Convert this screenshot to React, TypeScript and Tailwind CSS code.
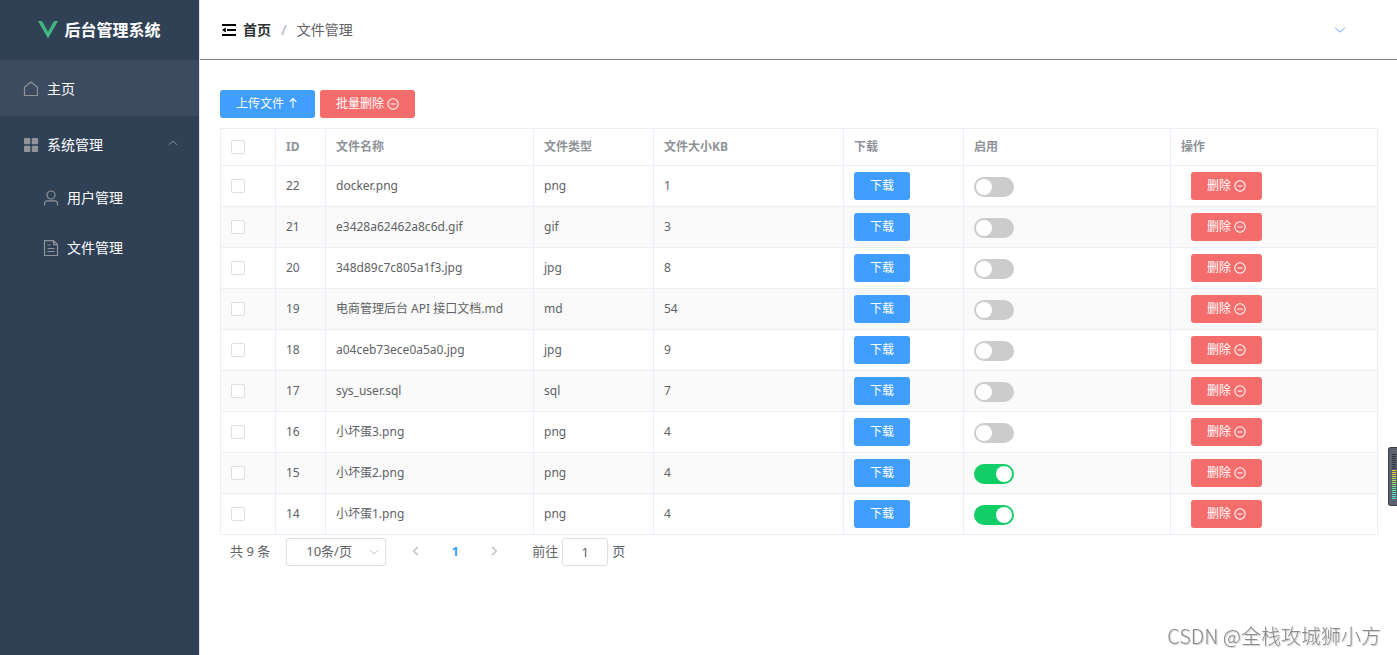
import { useState } from 'react';
import type { ReactNode } from 'react';
import clsx from 'clsx';

interface FileRow {
  id: number;
  name: string;
  type: string;
  size: number;
  enabled: boolean;
}

const initialFiles: FileRow[] = [
  { id: 22, name: 'docker.png', type: 'png', size: 1, enabled: false },
  { id: 21, name: 'e3428a62462a8c6d.gif', type: 'gif', size: 3, enabled: false },
  { id: 20, name: '348d89c7c805a1f3.jpg', type: 'jpg', size: 8, enabled: false },
  { id: 19, name: '电商管理后台 API 接口文档.md', type: 'md', size: 54, enabled: false },
  { id: 18, name: 'a04ceb73ece0a5a0.jpg', type: 'jpg', size: 9, enabled: false },
  { id: 17, name: 'sys_user.sql', type: 'sql', size: 7, enabled: false },
  { id: 16, name: '小坏蛋3.png', type: 'png', size: 4, enabled: false },
  { id: 15, name: '小坏蛋2.png', type: 'png', size: 4, enabled: true },
  { id: 14, name: '小坏蛋1.png', type: 'png', size: 4, enabled: true },
];

const meterColors = [
  '#2f333c', '#2f333c', '#2f333c', '#2f333c', '#2f333c', '#2f333c', '#2f333c', '#2f333c',
  '#f0c830', '#f0d03a', '#e4d840', '#d0e048', '#c0e850', '#b0e858', '#a0e868', '#90e878',
  '#80e888', '#70e898', '#60e8a8', '#58e8b8', '#58e8c4', '#58e8d0', '#58e8d0',
];

interface IconProps {
  className?: string;
  children: ReactNode;
}

function Icon({ className, children }: IconProps) {
  return (
    <svg
      viewBox="0 0 16 16"
      fill="none"
      stroke="currentColor"
      strokeWidth="1.2"
      className={clsx('shrink-0', className)}
      aria-hidden="true"
    >
      {children}
    </svg>
  );
}

function RemoveIcon() {
  return (
    <Icon className="size-3">
      <circle cx="8" cy="8" r="6.9" strokeWidth="1.4" />
      <path d="M4.5 8h7" strokeWidth="1.4" />
    </Icon>
  );
}

interface ActionButtonProps {
  color: 'blue' | 'red';
  className?: string;
  onClick?: () => void;
  children: ReactNode;
}

function ActionButton({ color, className, onClick, children }: ActionButtonProps) {
  return (
    <button
      type="button"
      onClick={onClick}
      className={clsx(
        'inline-flex h-7 items-center gap-[3px] rounded-[3px] px-4 text-xs text-white align-middle cursor-pointer',
        color === 'blue' ? 'bg-[#409eff]' : 'bg-[#f56c6c]',
        className,
      )}
    >
      {children}
    </button>
  );
}

interface CheckProps {
  label: string;
  checked: boolean;
  onChange: () => void;
}

function Check({ label, checked, onChange }: CheckProps) {
  return (
    <input
      type="checkbox"
      aria-label={label}
      checked={checked}
      onChange={onChange}
      className="block size-3.5 appearance-none rounded-[2px] border border-[#dcdfe6] bg-white checked:border-[#409eff] checked:bg-[#409eff]"
    />
  );
}

function Toggle({ label, checked, onChange }: CheckProps) {
  return (
    <input
      type="checkbox"
      role="switch"
      aria-label={label}
      checked={checked}
      onChange={onChange}
      className="mt-0.5 block h-5 w-10 appearance-none rounded-full bg-[#cccccc] p-0.5 before:block before:size-4 before:rounded-full before:bg-white checked:bg-[#13ce66] checked:before:ml-auto"
    />
  );
}

function Sidebar() {
  return (
    <aside className="w-[200px] shrink-0 border-r border-[#e6e6e6] bg-[#304156] text-sm text-white">
      <div className="flex h-[60px] items-center justify-center gap-1.5">
        <svg viewBox="0 0 20 18" className="h-[18px] w-5" aria-hidden="true">
          <path d="M0 0h4l6 10.4L16 0h4L10 17.6z" fill="#41b883" />
          <path d="M4 0h3.6L10 4.2 12.4 0H16l-6 10.4z" fill="#35495e" />
        </svg>
        <h1 className="text-base font-bold">后台管理系统</h1>
      </div>
      <nav>
        <a href="#home" className="flex h-14 items-center gap-2 bg-[#3c4b5f] pt-0.5 pl-[23px]">
          <Icon className="size-4 text-[#909399]">
            <path d="M1.5 6.2 8 1l6.5 5.2v8.3h-13z" />
          </Icon>
          <span>主页</span>
        </a>
        <button
          type="button"
          aria-expanded="true"
          className="flex h-14 w-full items-center gap-2 pt-0.5 pr-5 pl-[23px]"
        >
          <svg viewBox="0 0 16 16" className="size-4 text-[#909399]" fill="currentColor" aria-hidden="true">
            <rect x="1" y="1" width="6.3" height="6.3" rx="0.8" />
            <rect x="8.8" y="1" width="6.3" height="6.3" rx="0.8" />
            <rect x="1" y="8.8" width="6.3" height="6.3" rx="0.8" />
            <rect x="8.8" y="8.8" width="6.3" height="6.3" rx="0.8" />
          </svg>
          <span>系统管理</span>
          <Icon className="mb-1 ml-auto size-3 text-[#909399]">
            <path d="m2.500 10.500 5.500-5 5.500 5" />
          </Icon>
        </button>
        <a href="#users" className="flex h-[50px] items-center gap-2 pt-0.5 pl-[43px]">
          <Icon className="size-4 text-[#909399]">
            <circle cx="8" cy="5" r="4" />
            <path d="M1.500 15.500v-1.700c0-1.800 1.200-3 3-3h7c1.800 0 3 1.200 3 3v1.700" />
          </Icon>
          <span>用户管理</span>
        </a>
        <a href="#files" className="flex h-[50px] items-center gap-2 pt-0.5 pl-[43px]">
          <Icon className="size-4 text-[#909399]">
            <path d="M1.500 .600h9l4 4v10.900h-13zM10.500 .600v4h4M4.500 5h3M4.500 8.500h7M4.500 11.500h7" />
          </Icon>
          <span>文件管理</span>
        </a>
      </nav>
    </aside>
  );
}

function Header() {
  return (
    <header className="flex h-[60px] items-center justify-between border-b border-[#808080] pr-[50px] pl-[22px] text-sm">
      <div className="flex items-center">
        <button type="button" aria-label="折叠菜单" className="mr-[7px] text-black">
          <svg viewBox="0 0 14 14" className="size-3.5" fill="currentColor" aria-hidden="true">
            <path d="M0 1h14v2H0zM5 6h9v2H5zM0 11h14v2H0zM0 7l3.800-2.500v5z" />
          </svg>
        </button>
        <nav aria-label="面包屑" className="flex items-center">
          <a href="#home" className="font-bold text-[#303133]">首页</a>
          <span className="mx-2.5 font-bold text-[#c0c4cc]">/</span>
          <span className="text-[#606266]">文件管理</span>
        </nav>
      </div>
      <button type="button" aria-label="用户菜单" className="text-[#409eff]">
        <Icon className="size-3.5">
          <path d="m2.500 5.500 5.500 5 5.500-5" strokeWidth="1" />
        </Icon>
      </button>
    </header>
  );
}

function Pagination({ total }: { total: number }) {
  return (
    <div className="flex h-7 items-center px-2.5 text-[13px] text-[#606266]">
      <span className="mr-4">共 {total} 条</span>
      <div className="grid w-[100px] items-center">
        <select
          aria-label="每页条数"
          className="col-start-1 row-start-1 h-7 w-full appearance-none rounded-[3px] border border-[#dcdfe6] bg-white pl-[19px]"
        >
          <option>10条/页</option>
          <option>20条/页</option>
          <option>50条/页</option>
        </select>
        <Icon className="pointer-events-none col-start-1 row-start-1 mr-1.5 size-3 justify-self-end text-[#c0c4cc]">
          <path d="m2.500 5.500 5.500 5 5.500-5" />
        </Icon>
      </div>
      <div className="ml-2.5 flex items-center">
        <button type="button" aria-label="上一页" disabled className="flex w-10 justify-center pb-0.5 text-[#c0c4cc]">
          <Icon className="size-3">
            <path d="m10.500 2.500-5.500 5.500 5.500 5.500" strokeWidth="2" />
          </Icon>
        </button>
        <button type="button" aria-current="page" className="w-[38px] font-bold text-[#409eff]">1</button>
        <button type="button" aria-label="下一页" disabled className="flex w-10 justify-center pb-0.5 text-[#c0c4cc]">
          <Icon className="size-3">
            <path d="m5.500 2.500 5.500 5.500-5.500 5.500" strokeWidth="2" />
          </Icon>
        </button>
      </div>
      <label className="ml-[18px] flex items-center gap-1">
        前往
        <input
          type="text"
          defaultValue="1"
          className="h-7 w-[46px] rounded-[3px] border border-[#dcdfe6] bg-white text-center"
        />
        页
      </label>
    </div>
  );
}

export default function App() {
  const [files, setFiles] = useState<FileRow[]>(initialFiles);
  const [selected, setSelected] = useState<number[]>([]);

  const allSelected = files.length > 0 && selected.length === files.length;

  const toggleAll = () => {
    setSelected(allSelected ? [] : files.map((file) => file.id));
  };

  const toggleSelected = (id: number) => {
    setSelected(selected.includes(id) ? selected.filter((item) => item !== id) : [...selected, id]);
  };

  const toggleEnabled = (id: number) => {
    setFiles(files.map((file) => (file.id === id ? { ...file, enabled: !file.enabled } : file)));
  };

  const removeFiles = (ids: number[]) => {
    setFiles(files.filter((file) => !ids.includes(file.id)));
    setSelected(selected.filter((id) => !ids.includes(id)));
  };

  const headClass = 'h-[37px] border-r border-b border-[#ebeef5] px-2.5 text-left font-bold';
  const cellClass = 'h-[41px] border-r border-b border-[#ebeef5] px-2.5';

  return (
    <div className="flex min-h-screen bg-white font-['Noto_Sans','Noto_Sans_CJK_SC',sans-serif]">
      <Sidebar />
      <div className="min-w-0 flex-1">
        <Header />
        <main className="pt-[30px] pr-[19px] pl-5">
          <div className="mb-2.5 flex gap-[5px]">
            <ActionButton color="blue">
              上传文件
              <Icon className="mb-0.5 size-3">
                <path d="M8 14.500V2M3.500 6.500 8 2l4.500 4.500" strokeWidth="1.500" />
              </Icon>
            </ActionButton>
            <ActionButton color="red" onClick={() => removeFiles(selected)}>
              批量删除
              <RemoveIcon />
            </ActionButton>
          </div>

          <table className="w-full table-fixed border-separate border-spacing-0 border-t border-l border-[#ebeef5] text-xs text-[#606266]">
            <colgroup>
              <col className="w-[55px]" />
              <col className="w-[50px]" />
              <col className="w-[208px]" />
              <col className="w-[120px]" />
              <col className="w-[190px]" />
              <col className="w-[120px]" />
              <col />
              <col />
            </colgroup>
            <thead className="text-[#909399]">
              <tr>
                <th className={headClass}>
                  <Check label="全选" checked={allSelected} onChange={toggleAll} />
                </th>
                <th className={headClass}>ID</th>
                <th className={headClass}>文件名称</th>
                <th className={headClass}>文件类型</th>
                <th className={headClass}>文件大小KB</th>
                <th className={headClass}>下载</th>
                <th className={headClass}>启用</th>
                <th className={headClass}>操作</th>
              </tr>
            </thead>
            <tbody>
              {files.map((file) => (
                <tr key={file.id} className="even:bg-[#fafafa]">
                  <td className={cellClass}>
                    <Check
                      label={`选择 ${file.name}`}
                      checked={selected.includes(file.id)}
                      onChange={() => toggleSelected(file.id)}
                    />
                  </td>
                  <td className={cellClass}>{file.id}</td>
                  <td className={cellClass}>{file.name}</td>
                  <td className={cellClass}>{file.type}</td>
                  <td className={cellClass}>{file.size}</td>
                  <td className={cellClass}>
                    <ActionButton color="blue">下载</ActionButton>
                  </td>
                  <td className={cellClass}>
                    <Toggle
                      label={`启用 ${file.name}`}
                      checked={file.enabled}
                      onChange={() => toggleEnabled(file.id)}
                    />
                  </td>
                  <td className={cellClass}>
                    <ActionButton color="red" className="ml-2.5" onClick={() => removeFiles([file.id])}>
                      删除
                      <RemoveIcon />
                    </ActionButton>
                  </td>
                </tr>
              ))}
            </tbody>
          </table>

          <div className="pt-[3px]">
            <Pagination total={files.length} />
          </div>
        </main>
      </div>

      {/* Level meter docked to the window edge */}
      <div className="fixed top-[447px] right-0 flex h-[59px] w-[9px] flex-col items-end gap-px rounded-l-[3px] border border-r-0 border-[#3c3f48] bg-[#5c6270] pt-1.5 pr-px">
        {meterColors.map((color, index) => (
          <span key={index} className="h-px w-1" style={{ backgroundColor: color }} />
        ))}
      </div>

      <p className="fixed right-4 bottom-1 text-[20px] leading-[30px] font-light text-[#8c8c8c] [text-shadow:1px_1px_1px_#cccccc] font-['Noto_Sans_CJK_SC',sans-serif]">
        CSDN @全栈攻城狮小方
      </p>
    </div>
  );
}
